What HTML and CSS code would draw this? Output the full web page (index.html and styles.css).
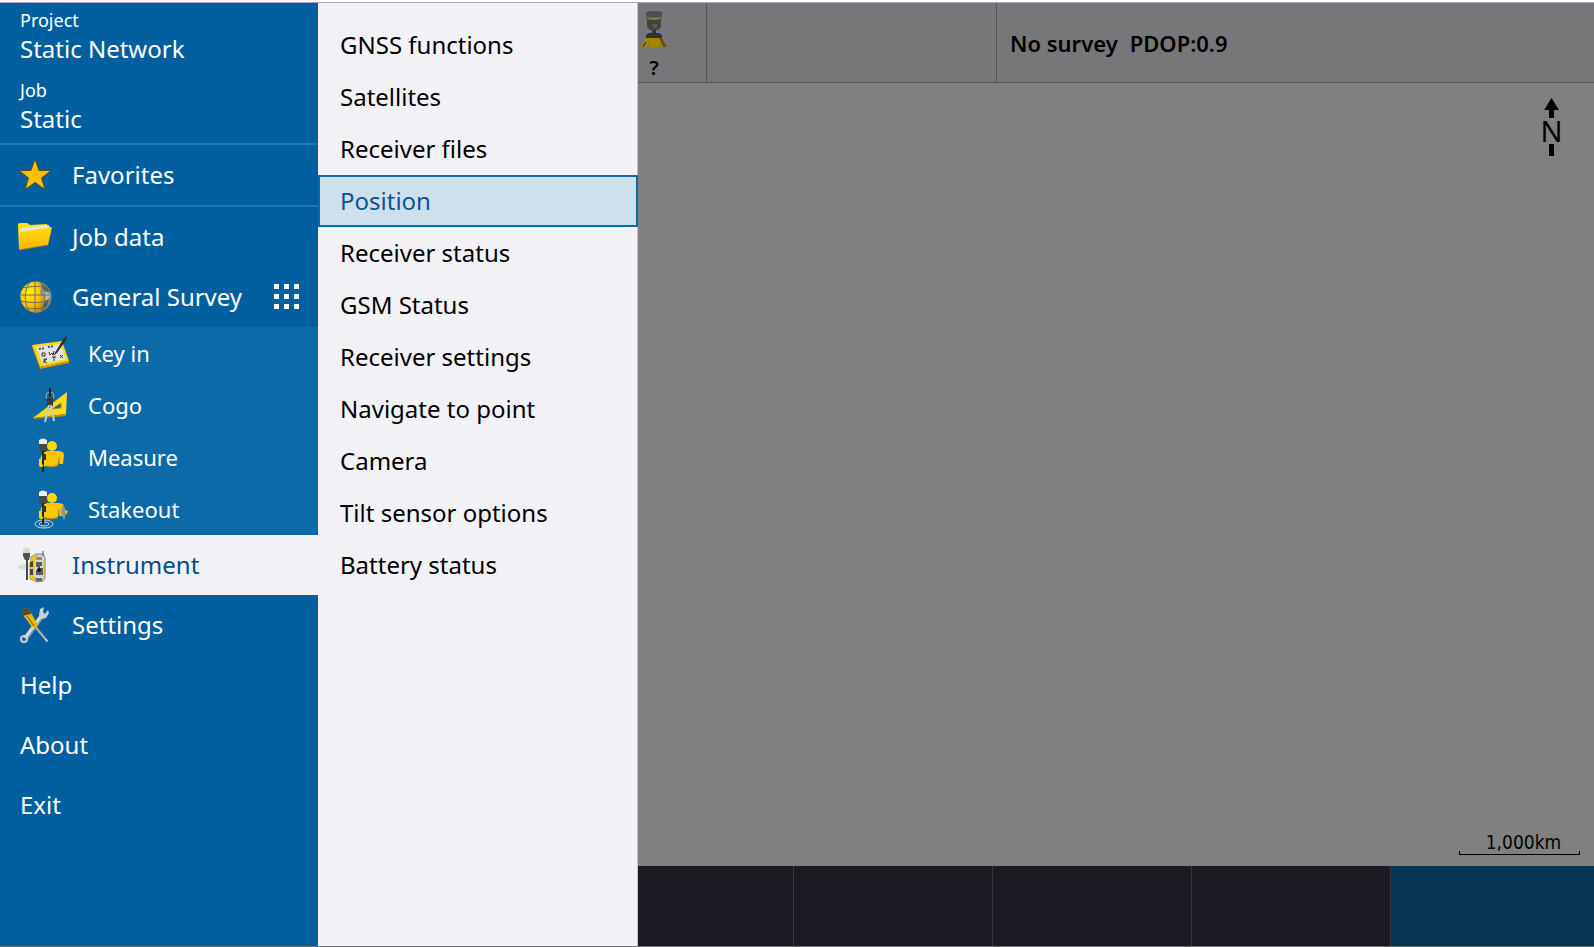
FILE: index.html
```html
<!DOCTYPE html>
<html lang="en">
<head>
    <meta charset="UTF-8">
    <meta name="viewport" content="width=device-width, initial-scale=1.0">
    <title>General Survey</title>
    <link rel="stylesheet" href="styles.css">
</head>

<body>
    <div class="app">
        <nav class="sidebar" aria-label="Main menu">
            <dl class="project">
                <div>
                    <dt>Project</dt>
                    <dd>Static Network</dd>
                </div>
                <div>
                    <dt>Job</dt>
                    <dd>Static</dd>
                </div>
            </dl>

            <button class="item favorites">
                <svg class="icon" viewBox="0 0 36 36">
                    <path d="M17 2l4 11.500h12l-9.500 7.500 3.500 11.500-10-7-10 7 3.500-11.500L1 13.500h12z" fill="#ffc000" stroke="#5a4a22" stroke-width="1"/>
                </svg>
                Favorites
            </button>

            <button class="item">
                <svg class="icon" viewBox="0 0 36 36">
                    <defs>
                        <linearGradient id="folder" x1="0" y1="0" x2="0" y2="1">
                            <stop offset="0" stop-color="#ffdd10"/>
                            <stop offset="1" stop-color="#ffb300"/>
                        </linearGradient>
                    </defs>
                    <path d="M0 5l2-1h7l3 2 17-1 1 4v15L1 30z" fill="#ffe500"/>
                    <path d="M2 12l2-3 27-3 1 4-2 12-28 5z" fill="#e4e4e0"/>
                    <path d="M2 13l32-5-4 18L1 31z" fill="url(#folder)"/>
                    <path d="M1 31l29-5" stroke="#9a7a20" stroke-width="1" fill="none"/>
                </svg>
                Job data
            </button>

            <button class="item">
                <svg class="icon" viewBox="0 0 36 36">
                    <defs>
                        <radialGradient id="globe" cx=".35" cy=".35" r=".7">
                            <stop offset="0" stop-color="#fff000"/>
                            <stop offset=".6" stop-color="#fcc800"/>
                            <stop offset="1" stop-color="#c98c00"/>
                        </radialGradient>
                    </defs>
                    <circle cx="18" cy="18" r="15.500" fill="#8c8f92"/>
                    <path d="M21 3C9 1 2 10 2.500 18S9 33 18 33.500c4 0 6-1 7-4l-1-6 3-5-4-2-1-5 2-4z" fill="url(#globe)"/>
                    <path d="M24 5l5 3 3 5-4-1-4-3zM27 22l4-2-2 7-5 5z" fill="#56595c"/>
                    <path d="M25 13c3-1 5 1 7 2l-1 5-5 2z" fill="#b4b6b9"/>
                    <path d="M5 9c8-2 16-2 24-1M3 16h29M3 22c8 2 19 2 29 0M8 29c6 1 14 1 20-1M17 3v30M11 4C6 12 6 24 11 32M23 4c5 9 5 19 0 28" fill="none" stroke="#77704a" stroke-width="1"/>
                </svg>
                General Survey
                <svg class="apps" viewBox="0 0 25 25">
                    <path d="M0 0h5v5H0zM10 0h5v5h-5zM20 0h5v5h-5zM0 10h5v5H0zM10 10h5v5h-5zM20 10h5v5h-5zM0 20h5v5H0zM10 20h5v5h-5zM20 20h5v5h-5z" fill="#fff"/>
                </svg>
            </button>

            <div class="subitems">
                <button class="item">
                    <svg class="icon" viewBox="0 0 36 36">
                        <path d="M2 12l5 22 27-5-2-4z" fill="#0a4672" opacity=".5"/>
                        <path d="M0 10l30-4 7 20-29 6z" fill="#ffd51c"/>
                        <path d="M8 32l29-6v2L8 34 0 12v-2z" fill="#d99b00"/>
                        <path d="M4 12l24-3 6 15-23 5z" fill="#e2e3e3"/>
                        <path d="M7 14l6-1M16 12l6-1" stroke="#555" stroke-width="2" stroke-dasharray="2 1" fill="none"/>
                        <path d="M10 18h3v3h-3zM17 17l1 3 2-2 1 2 1-4M12 24v4m0-4h3l-3 2 3 2M20 22h4m-2 0v4M28 20l3 3m0-3l-3 3" stroke="#333" stroke-width="1" fill="none"/>
                        <path d="M21 21l3-5L32 3l3-2-1 4-9 13z" fill="#2e2c2a"/>
                    </svg>
                    Key in
                </button>
                <button class="item">
                    <svg class="icon" viewBox="0 0 36 36">
                        <path d="M1 31L35 5l-1 22z" fill="#ffdc16"/>
                        <path d="M1 31l33-4v2L2 32z" fill="#c58f00"/>
                        <path d="M20 22l9-6v5z" fill="#0d6aa8" stroke="#b78a00" stroke-width="1"/>
                        <circle cx="18" cy="9" r="4" fill="none" stroke="#a2abb2" stroke-width="1"/>
                        <path d="M18 1v9" stroke="#222" stroke-width="2"/>
                        <path d="M15 11h6v8l-3 2-3-2z" fill="#34383d"/>
                        <path d="M17 18l-4 17M19 18l3 16" stroke="#c3cad0" stroke-width="2" fill="none"/>
                    </svg>
                    Cogo
                </button>
                <button class="item">
                    <svg class="icon" viewBox="0 0 36 36">
                        <g id="surveyor">
                            <circle cx="20" cy="7" r="5" fill="#ffd800"/>
                            <path d="M12 13l3-1h12l4 1 1 3-1 9h-4v-6l-1 7q-7 3-13 1l-5 1-1-2 2-9z" fill="#fcc600"/>
                            <path d="M27 18v7M13 27q7 2 13 0" stroke="#b78300" stroke-width="1" fill="none"/>
                            <path d="M7 4h8v6l-1 3H8l-1-3z" fill="#45484c"/>
                            <path d="M7 1q4-3 8 0v4H7z" fill="#efede2"/>
                            <path d="M11 12v21" stroke="#24282d" stroke-width="2"/>
                            <path d="M11 15h3v6h-4z" fill="#30343a"/>
                            <path d="M8 20v6l3 1" stroke="#ffd800" stroke-width="2" fill="none"/>
                        </g>
                    </svg>
                    Measure
                </button>
                <button class="item">
                    <svg class="icon" viewBox="0 0 36 36">
                        <ellipse cx="12" cy="33" rx="9" ry="4" fill="none" stroke="#cfd6da" stroke-width="1"/>
                        <ellipse cx="12" cy="33" rx="5" ry="2" fill="none" stroke="#cfd6da" stroke-width="1"/>
                        <use href="#surveyor"/>
                        <path d="M31 13q5 8 1 16-5-6-1-16z" fill="#8d959a"/>
                        <path d="M33 19l3 1-2 4z" fill="#ffc800"/>
                    </svg>
                    Stakeout
                </button>
            </div>

            <button class="item current">
                <svg class="icon" viewBox="0 0 36 36">
                    <ellipse cx="7" cy="20" rx="7" ry="3" fill="#dcdbe0"/>
                    <path d="M5 4h7v5l-1 4H7L5 9z" fill="#505050"/>
                    <path d="M5 2q3-3 7 0v4H5z" fill="#dbd9c9"/>
                    <path d="M9 12v21" stroke="#4a4a4a" stroke-width="2"/>
                    <path d="M13 10l5-3h7l2 4v20l-2 3-6 1-7-3z" fill="#d6d6d2" stroke="#808080" stroke-width="1"/>
                    <path d="M21 8h-4l-4 3-2 6v13l4 4 3-1-2-4 1-15 2-4z" fill="#f3c31c"/>
                    <path d="M12 15l3-1v6h-3zM12 22h3v6h-3z" fill="#4a4636"/>
                    <path d="M18 10h6v3h-6z" fill="#8b8b8b"/>
                    <path d="M18 15h6v4h-2v2h3v7h-7v-5h2v-3h-2z" fill="#5a5d60"/>
                    <circle cx="21" cy="23" r="2" fill="#101215"/>
                    <path d="M17 31h7v3h-6z" fill="#66686a"/>
                    <path d="M25 4v5" stroke="#555" stroke-width="1"/>
                    <path d="M26 13v17" stroke="#e5b91b" stroke-width="1"/>
                </svg>
                Instrument
            </button>

            <button class="item">
                <svg class="icon" viewBox="0 0 36 36">
                    <path d="M8 31L24 9" stroke="#858d94" stroke-width="5"/>
                    <path d="M7 31L24 8" stroke="#d5dade" stroke-width="3"/>
                    <path d="M21 8l1-6 4-2-1 5 2 2 3-4 1 3-3 5-5 1z" fill="#c9cfd4"/>
                    <circle cx="6" cy="32" r="3" fill="none" stroke="#c9cfd4" stroke-width="2"/>
                    <path d="M15 17l14 17" stroke="#aeb5ba" stroke-width="2"/>
                    <path d="M26 30l3 5 1-1z" fill="#e8e8e8"/>
                    <path d="M4 3l4-2 4 3 8 14-2 3-4-1L5 8z" fill="#eeb800"/>
                    <path d="M4 3l4-2 4 3 1 3-5 1-3 1z" fill="#534a38"/>
                    <path d="M9 9l7 10" stroke="#6b5410" stroke-width="1"/>
                </svg>
                Settings
            </button>
            <button class="item plain">Help</button>
            <button class="item plain">About</button>
            <button class="item plain">Exit</button>
        </nav>

        <nav class="submenu" aria-label="Instrument">
            <button>GNSS functions</button>
            <button>Satellites</button>
            <button>Receiver files</button>
            <button class="selected">Position</button>
            <button>Receiver status</button>
            <button>GSM Status</button>
            <button>Receiver settings</button>
            <button>Navigate to point</button>
            <button>Camera</button>
            <button>Tilt sensor options</button>
            <button>Battery status</button>
        </nav>

        <main class="workspace">
            <header class="statusbar">
                <div class="receiver">
                    <svg class="icon" viewBox="0 0 26 36">
                        <path d="M5 1q8-2 16 0v7H5z" fill="#4d4d4d"/>
                        <path d="M5 6q8 1 16 0v1q-8 2-16 0z" fill="#9c8427"/>
                        <path d="M6 8q7 2 14 0v8l-3 3H9l-3-3z" fill="#414244"/>
                        <path d="M12 13h4v4h-4z" fill="#5b5b50"/>
                        <path d="M11 19h4v5h-4z" fill="#35373a"/>
                        <path d="M5 24l3-2h10l3 2v3H5z" fill="#303133"/>
                        <path d="M5 27h16l5 9h-5l-3-5v5H9v-5l-4 5H0z" fill="#a88600"/>
                        <path d="M18 27h3l5 9h-4z" fill="#7b4810"/>
                        <path d="M5 31l-3 5" stroke="#2d2810" stroke-width="1" fill="none"/>
                    </svg>
                    <span>?</span>
                </div>
                <div></div>
                <div class="survey"><span>No survey</span><span>PDOP:0.9</span></div>
            </header>

            <section class="map" aria-label="Map">
                <div class="north">
                    <svg viewBox="0 0 15 20"><path d="M7.500 0L15 12h-5v8H5v-8H0z"/></svg>
                    <span>N</span>
                    <i></i>
                </div>
                <div class="scale">
                    <span>1,000km</span>
                    <i></i>
                </div>
            </section>

            <footer class="softkeys">
                <button aria-label="Softkey 1"></button>
                <button aria-label="Softkey 2"></button>
                <button aria-label="Softkey 3"></button>
                <button aria-label="Softkey 4"></button>
                <button class="accept" aria-label="Accept"></button>
            </footer>
        </main>
    </div>
</body>
</html>
```
FILE: styles.css
```css
* {
    box-sizing: border-box;
}

body {
    margin: 0;
    padding-top: 2px;
    background-color: #ffffff;
    font-family: "Noto Sans", "Open Sans", sans-serif;
    font-size: 24px;
    color: #000000;
}

button {
    margin: 0;
    border: 0;
    background: none;
    font: inherit;
    color: inherit;
    text-align: left;
    cursor: pointer;
}

.app {
    display: flex;
    min-height: calc(100vh - 2px);
    border-top: 1px solid #aaa8b8;
    border-bottom: 1px solid #707074;
}

/* Left menu */
.sidebar {
    display: flex;
    flex-direction: column;
    flex: 0 0 318px;
    background-color: #005f9e;
    color: #ffffff;
}

.project {
    display: flex;
    flex-direction: column;
    gap: 12px;
    margin: 0;
    padding: 4px 20px 8px;
}

.project dt {
    font-size: 18px;
    line-height: 26px;
}

.project dd {
    margin: 0;
    line-height: 32px;
}

.item {
    display: flex;
    align-items: center;
    gap: 18px;
    height: 60px;
    padding: 0 19px 1px 18px;
}

.icon {
    flex: none;
    width: 36px;
    height: 36px;
    overflow: visible;
}

.plain {
    padding-left: 20px;
}

.favorites {
    height: 64px;
    border-top: 2px solid #1a78b5;
    border-bottom: 2px solid #1a78b5;
}

.apps {
    width: 25px;
    height: 25px;
    margin-left: auto;
}

.subitems {
    display: flex;
    flex-direction: column;
    background-color: #0d6aa8;
    font-size: 22px;
}

.subitems .item {
    gap: 20px;
    height: 52px;
    padding-left: 32px;
}

.current {
    background-color: #f2f1f6;
    color: #004f8c;
}

/* Second level menu */
.submenu {
    display: flex;
    flex-direction: column;
    flex: 0 0 320px;
    padding-top: 16px;
    background-color: #f2f1f6;
    box-shadow: inset -1px 0 #c4c4c8;
}

.submenu button {
    height: 52px;
    padding: 0 20px 2px;
    border: 2px solid transparent;
}

.submenu .selected {
    border-color: #0d6aa8;
    background-color: #cfe0ed;
    color: #0b5394;
}

/* Dimmed map screen */
.workspace {
    display: flex;
    flex-direction: column;
    flex: 1;
}

.statusbar {
    display: grid;
    grid-template-columns: 68px 290px 1fr;
    height: 80px;
    border-bottom: 1px solid #555557;
    background-color: #777779;
    font-size: 22px;
    font-weight: 600;
}

.statusbar > div + div {
    border-left: 1px solid #555557;
}

.statusbar .receiver {
    display: flex;
    flex-direction: column;
    align-items: center;
    width: 32px;
    padding-top: 8px;
    gap: 8px;
    font-size: 20px;
    line-height: 26px;
}

.receiver .icon {
    width: 26px;
}

.survey {
    display: flex;
    align-items: center;
    gap: 12px;
    padding: 0 13px;
}

.map {
    display: flex;
    flex-direction: column;
    justify-content: space-between;
    align-items: flex-end;
    flex: 1;
    padding: 15px 14px 11px;
    background-color: #808080;
}

.north {
    display: flex;
    flex-direction: column;
    align-items: center;
    width: 57px;
    font-size: 29px;
    line-height: 26px;
}

.north svg {
    width: 15px;
    height: 20px;
}

.north i {
    width: 5px;
    height: 12px;
    background-color: #000000;
}

.scale {
    display: flex;
    flex-direction: column;
    width: 121px;
    font-family: "DejaVu Sans Condensed", "DejaVu Sans", sans-serif;
    font-size: 19px;
    line-height: 17px;
    text-align: center;
}

.scale span {
    padding-left: 8px;
}

.scale i {
    height: 4px;
    border: 1px solid #000000;
    border-top: 0;
}

.softkeys {
    display: grid;
    grid-template-columns: 156fr 199fr 199fr 199fr 203fr;
    height: 80px;
    background-color: #1c1a22;
}

.softkeys button {
    border-right: 1px solid #39383c;
}

.softkeys .accept {
    border-right: 0;
    background-color: #053552;
}
```
